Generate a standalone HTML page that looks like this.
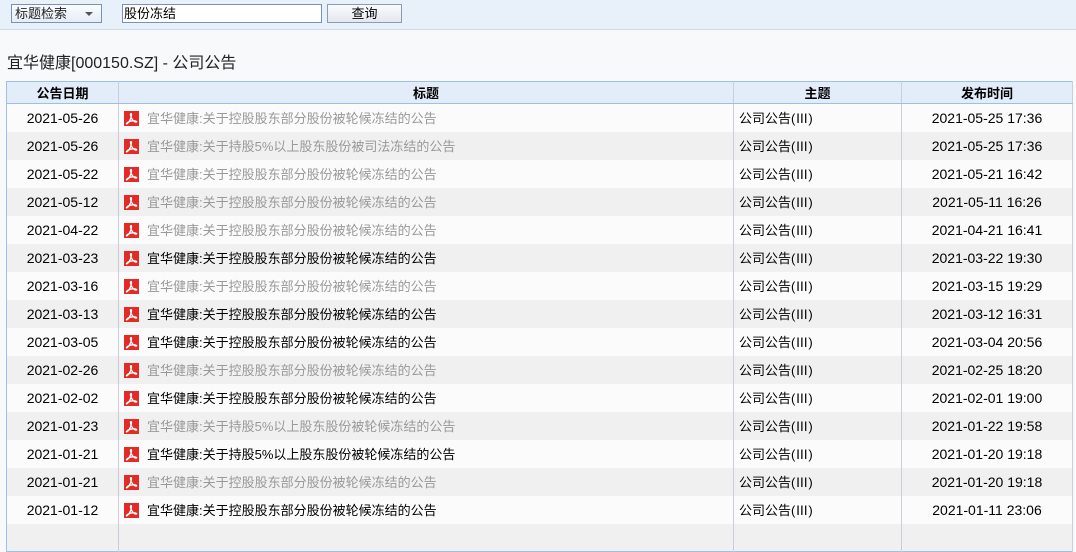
<!DOCTYPE html>
<html><head><meta charset="utf-8"><style>
*{margin:0;padding:0;box-sizing:border-box}
body{width:1076px;height:530px;overflow:hidden;background:#f8f9fb;font-family:"Liberation Sans","Noto Sans CJK SC",sans-serif;font-size:13px;color:#000;position:relative}
.top{position:absolute;left:0;top:0;width:1076px;height:30px;background:#e8f0fa;border-bottom:1px solid #cfdbe9}
.sel{position:absolute;left:11px;top:4px;width:91px;height:19px;border:1px solid #7a93b5;background:linear-gradient(#fafcff,#e6edf6);font-size:13px;line-height:17px;padding-left:3px;color:#222}
.sel:after{content:"";position:absolute;right:8px;top:7px;border-left:4px solid transparent;border-right:4px solid transparent;border-top:4px solid #555}
.inp{position:absolute;left:122px;top:4px;width:200px;height:19px;border:1px solid #7a93b5;background:#fff;line-height:17px;padding-left:1px;font-size:13px}
.btn{position:absolute;left:327px;top:4px;width:75px;height:19px;border:1px solid #8a9cb4;background:linear-gradient(#fafbfd,#e3e8ef);text-align:center;line-height:17px;font-size:13px}
.h1{position:absolute;left:7px;top:49px;font-size:16px;color:#222}
table{position:absolute;left:6px;top:81px;width:1066px;border-collapse:collapse;table-layout:fixed;border:1px solid #9ebfe8}
th{height:22px;background:#e3edf9;font-weight:bold;font-size:13px;border-right:1px solid #c9cfd8;border-bottom:1px solid #9ebfe8}
td{height:28px;border-right:1px solid #c9cfd8;font-size:13px;white-space:nowrap;overflow:hidden}
tr:nth-child(odd) td{background:#fbfbfc}
tr:nth-child(even) td{background:#f0f0f0}
td.c{text-align:center;font-size:14px}
td.t{padding-left:5px;color:#999}
td.t.b{color:#000}
td.s{padding-left:5px}
.ic{display:inline-block;width:15px;height:15px;background:#e02b27;vertical-align:-3px;margin-right:8px;position:relative}
.ic svg{position:absolute;left:0;top:0}
</style></head><body>
<div class="top">
<div class="sel">标题检索</div>
<div class="inp">股份冻结</div>
<div class="btn">查询</div>
</div>
<div class="h1">宜华健康[000150.SZ] - 公司公告</div>
<table>
<colgroup><col style="width:112px"><col style="width:615px"><col style="width:168px"><col style="width:171px"></colgroup>
<tr><th>公告日期</th><th>标题</th><th>主题</th><th>发布时间</th></tr>
<tbody id="b"></tbody>
</table>
<script>
var d=[["2021-05-26","宜华健康:关于控股股东部分股份被轮候冻结的公告","2021-05-25 17:36",0],
["2021-05-26","宜华健康:关于持股5%以上股东股份被司法冻结的公告","2021-05-25 17:36",0],
["2021-05-22","宜华健康:关于控股股东部分股份被轮候冻结的公告","2021-05-21 16:42",0],
["2021-05-12","宜华健康:关于控股股东部分股份被轮候冻结的公告","2021-05-11 16:26",0],
["2021-04-22","宜华健康:关于控股股东部分股份被轮候冻结的公告","2021-04-21 16:41",0],
["2021-03-23","宜华健康:关于控股股东部分股份被轮候冻结的公告","2021-03-22 19:30",1],
["2021-03-16","宜华健康:关于控股股东部分股份被轮候冻结的公告","2021-03-15 19:29",0],
["2021-03-13","宜华健康:关于控股股东部分股份被轮候冻结的公告","2021-03-12 16:31",1],
["2021-03-05","宜华健康:关于控股股东部分股份被轮候冻结的公告","2021-03-04 20:56",1],
["2021-02-26","宜华健康:关于控股股东部分股份被轮候冻结的公告","2021-02-25 18:20",0],
["2021-02-02","宜华健康:关于控股股东部分股份被轮候冻结的公告","2021-02-01 19:00",1],
["2021-01-23","宜华健康:关于持股5%以上股东股份被轮候冻结的公告","2021-01-22 19:58",0],
["2021-01-21","宜华健康:关于持股5%以上股东股份被轮候冻结的公告","2021-01-20 19:18",1],
["2021-01-21","宜华健康:关于控股股东部分股份被轮候冻结的公告","2021-01-20 19:18",0],
["2021-01-12","宜华健康:关于控股股东部分股份被轮候冻结的公告","2021-01-11 23:06",1],
["","","",0]];
var ic='<span class="ic"><svg width="15" height="15" viewBox="0 0 15 15"><path d="M7 2.5c-1 0-.5 3 1 5.5s3.5 3.5 4.5 3c.8-.5-1-1.5-4-1.2S3 11.5 2.5 12.5c-.4.9 1.5.2 3-2.5S8.2 2.5 7 2.5z" fill="none" stroke="#fff" stroke-width="1.3"/></svg></span>';
var h='';d.forEach(function(r){h+='<tr><td class="c">'+r[0]+'</td><td class="t'+(r[3]?' b':'')+'">'+(r[0]?ic:'')+r[1]+'</td><td class="s">'+(r[0]?'公司公告(Ⅲ)':'')+'</td><td class="c">'+r[2]+'</td></tr>';});
document.getElementById('b').innerHTML=h;
</script>
</body></html>
